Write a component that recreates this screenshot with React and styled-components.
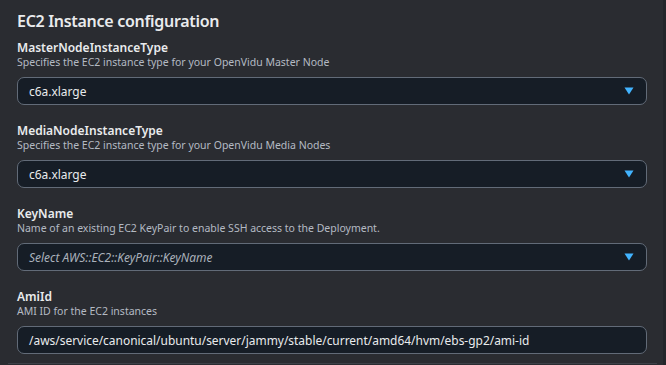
import styled, { createGlobalStyle } from "styled-components"

const GlobalStyle = createGlobalStyle`
    html, body {
        margin: 0;
        padding: 0;
        background: #2a2c31;
    }
    body {
        font-family: "Noto Sans", "Open Sans", sans-serif;
        color: #e9ebed;
    }
`

const Page = styled.div`
    width: 666px;
    height: 365px;
    overflow: hidden;
    display: flex;
    background: #2a2c31;
`

const Panel = styled.div`
    flex: 1;
    padding: 9px 0 0 0;
    display: flex;
    flex-direction: column;
    border-bottom: 1px solid #3d4048;
    margin: 0 6px 1px 8px;
    height: 354px;
`

const Edge = styled.div`
    width: 3px;
    background: #23252a;
`

const Title = styled.h2`
    margin: 0 0 7px 9px;
    font-size: 16px;
    line-height: 24px;
    font-weight: 600;
    letter-spacing: -0.3px;
    color: #e9ebed;
`

const Field = styled.div`
    display: flex;
    flex-direction: column;
    margin: 0 0 18px 9px;
    width: 630px;
`

const Label = styled.div`
    font-size: 12px;
    line-height: 15px;
    font-weight: 600;
    color: #e9ebed;
`

const Description = styled.div`
    font-size: 10.5px;
    line-height: 14px;
    color: #b4bac3;
    margin-bottom: 8px;
`

const Box = styled.div`
    box-sizing: border-box;
    height: 28px;
    border: 1px solid #626b78;
    border-radius: 7px;
    background: #161d26;
    display: flex;
    align-items: center;
    justify-content: space-between;
    padding: 0 12px 0 11px;
    font-size: 11.95px;
    color: ${p => (p.$placeholder ? "#aab1bb" : "#e9ebed")};
    font-style: ${p => (p.$placeholder ? "italic" : "normal")};
`

const Caret = () => (
    <svg width="10" height="8" viewBox="0 0 10 8">
        <path d="M0.5 0.5 H9.5 L5 7.5 Z" fill="#42b4ff" />
    </svg>
)

const fields = [
    {
        label: "MasterNodeInstanceType",
        desc: "Specifies the EC2 instance type for your OpenVidu Master Node",
        value: "c6a.xlarge",
        select: true,
    },
    {
        label: "MediaNodeInstanceType",
        desc: "Specifies the EC2 instance type for your OpenVidu Media Nodes",
        value: "c6a.xlarge",
        select: true,
    },
    {
        label: "KeyName",
        desc: "Name of an existing EC2 KeyPair to enable SSH access to the Deployment.",
        value: "Select AWS::EC2::KeyPair::KeyName",
        select: true,
        placeholder: true,
    },
    {
        label: "AmiId",
        desc: "AMI ID for the EC2 instances",
        value: "/aws/service/canonical/ubuntu/server/jammy/stable/current/amd64/hvm/ebs-gp2/ami-id",
    },
]

export default function App() {
    return (
        <>
            <GlobalStyle />
            <Page>
                <Panel>
                    <Title>EC2 Instance configuration</Title>
                    {fields.map(f => (
                        <Field key={f.label}>
                            <Label>{f.label}</Label>
                            <Description>{f.desc}</Description>
                            <Box $placeholder={f.placeholder}>
                                <span>{f.value}</span>
                                {f.select && <Caret />}
                            </Box>
                        </Field>
                    ))}
                </Panel>
                <Edge />
            </Page>
        </>
    )
}
